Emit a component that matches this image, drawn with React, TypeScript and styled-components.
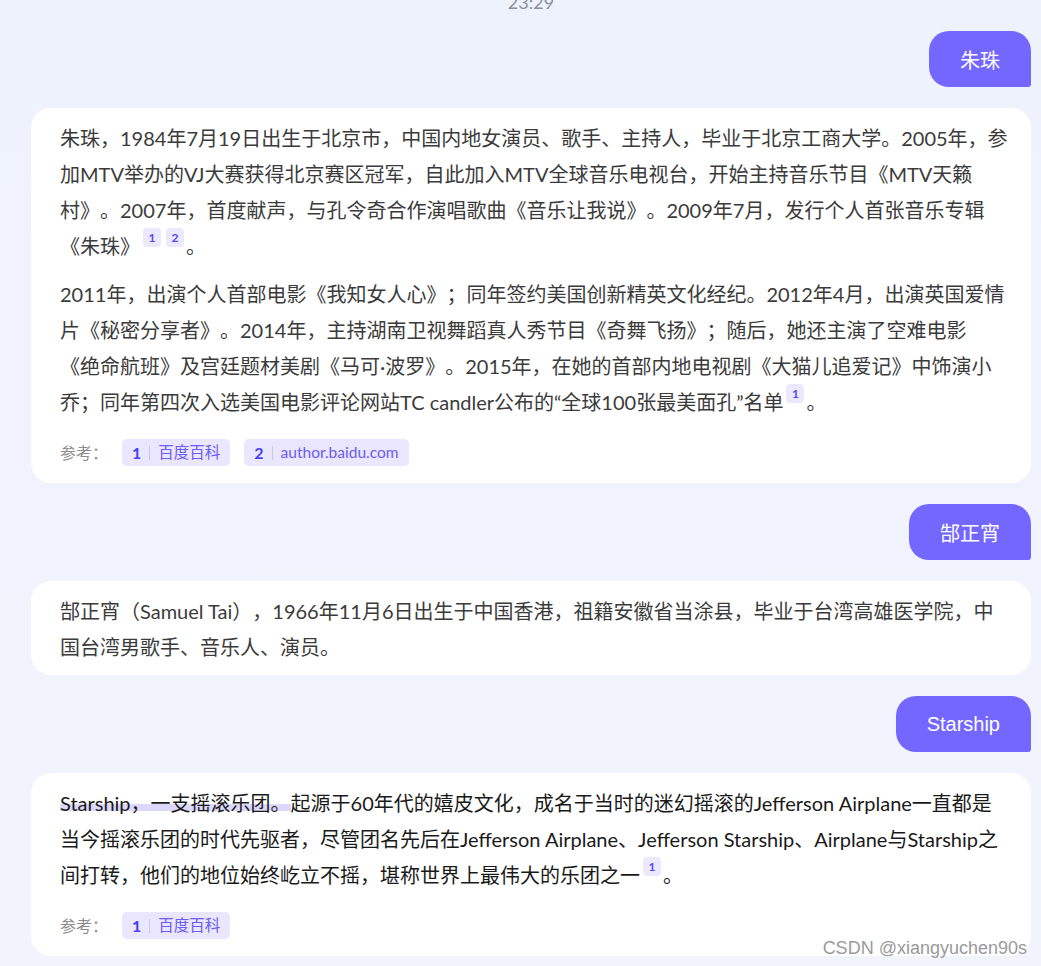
import styled, { createGlobalStyle } from "styled-components";

const GlobalStyle = createGlobalStyle`
  html, body {
    margin: 0;
    padding: 0;
  }
  body {
    background: linear-gradient(180deg, #eef2fd 0%, #f2f4fd 100%);
    font-family: Lato, "Noto Sans CJK SC", sans-serif;
  }
`;

type Ref = { id: number; name: string };

const zhuzhuRefs: Ref[] = [
  { id: 1, name: "百度百科" },
  { id: 2, name: "author.baidu.com" },
];

const starshipRefs: Ref[] = [{ id: 1, name: "百度百科" }];

const RefList = ({ items }: { items: Ref[] }) => (
  <Refs>
    <RefsLabel>参考：</RefsLabel>
    {items.map((r) => (
      <RefChip key={r.id}>
        <RefIndex>{r.id}</RefIndex>
        <RefDivider />
        <RefName>{r.name}</RefName>
      </RefChip>
    ))}
  </Refs>
);

const App = () => {
  return (
    <>
      <GlobalStyle />
      <Page>
        <Time>23:29</Time>
        <Thread>
          <UserRow>
            <UserBubble>朱珠</UserBubble>
          </UserRow>
          <AnswerCard>
            <Paragraph>
              朱珠，1984年7月19日出生于北京市，中国内地女演员、歌手、主持人，毕业于北京工商大学。2005年，参
              <br />
              加MTV举办的VJ大赛获得北京赛区冠军，自此加入MTV全球音乐电视台，开始主持音乐节目《MTV天籁
              <br />
              村》。2007年，首度献声，与孔令奇合作演唱歌曲《音乐让我说》。2009年7月，发行个人首张音乐专辑
              <br />
              《朱珠》<Cite>1</Cite>
              <Cite>2</Cite>。
            </Paragraph>
            <Paragraph>
              2011年，出演个人首部电影《我知女人心》；同年签约美国创新精英文化经纪。2012年4月，出演英国爱情
              <br />
              片《秘密分享者》。2014年，主持湖南卫视舞蹈真人秀节目《奇舞飞扬》；随后，她还主演了空难电影
              <br />
              《绝命航班》及宫廷题材美剧《马可·波罗》。2015年，在她的首部内地电视剧《大猫儿追爱记》中饰演小
              <br />
              乔；同年第四次入选美国电影评论网站TC candler公布的“全球100张最美面孔”名单<Cite>1</Cite>。
            </Paragraph>
            <RefList items={zhuzhuRefs} />
          </AnswerCard>

          <UserRow>
            <UserBubble>郜正宵</UserBubble>
          </UserRow>
          <AnswerCard>
            <Paragraph>
              郜正宵（Samuel Tai），1966年11月6日出生于中国香港，祖籍安徽省当涂县，毕业于台湾高雄医学院，中
              <br />
              国台湾男歌手、音乐人、演员。
            </Paragraph>
          </AnswerCard>

          <UserRow>
            <UserBubble>Starship</UserBubble>
          </UserRow>
          <AnswerCard $strong>
            <Paragraph>
              <Mark>Starship，一支摇滚乐团。</Mark>
              起源于60年代的嬉皮文化，成名于当时的迷幻摇滚的Jefferson Airplane一直都是
              <br />
              当今摇滚乐团的时代先驱者，尽管团名先后在Jefferson Airplane、Jefferson Starship、Airplane与Starship之
              <br />
              间打转，他们的地位始终屹立不摇，堪称世界上最伟大的乐团之一<Cite>1</Cite>。
            </Paragraph>
            <RefList items={starshipRefs} />
          </AnswerCard>
        </Thread>
        <Watermark>CSDN @xiangyuchen90s</Watermark>
      </Page>
    </>
  );
};

export default App;

const Page = styled.div`
  position: relative;
  min-height: 966px;
  box-sizing: border-box;
  padding: 0 10px 0 31px;
  overflow: hidden;
`;

const Time = styled.div`
  margin: -8px 0 19px;
  text-align: center;
  font-size: 18px;
  line-height: 20px;
  color: #8b8f99;
`;

const Thread = styled.div`
  display: flex;
  flex-direction: column;
  gap: 21px;
`;

const UserRow = styled.div`
  display: flex;
  justify-content: flex-end;
`;

const UserBubble = styled.div`
  height: 56px;
  box-sizing: border-box;
  padding: 0 31px;
  display: flex;
  align-items: center;
  background: #7367ff;
  color: #ffffff;
  font-family: "Liberation Sans", "Noto Sans CJK SC", sans-serif;
  font-size: 20px;
  border-radius: 20px 20px 3px 20px;
`;

const AnswerCard = styled.div<{ $strong?: boolean }>`
  background: #ffffff;
  border-radius: 20px;
  padding: 12px 29px 10px;
  color: ${({ $strong }) => ($strong ? "#1a1a1a" : "#3b3b3b")};
  font-size: 20px;
  line-height: 36px;
`;

const Paragraph = styled.p`
  margin: 0;
  text-spacing-trim: space-all;
  white-space: nowrap;

  & + & {
    margin-top: 12px;
  }
`;

const Cite = styled.span`
  display: inline-block;
  width: 18px;
  height: 19px;
  margin: 0 2px 0 3px;
  border-radius: 4px;
  background: #ece9ff;
  color: #5448f2;
  font-size: 12px;
  font-weight: 700;
  line-height: 19px;
  text-align: center;
  vertical-align: 12px;
`;

const Mark = styled.span`
  background: linear-gradient(
    180deg,
    transparent 0%,
    transparent 54%,
    #dcd8fc 54%,
    #dcd8fc 84%,
    transparent 84%
  );
`;

const Refs = styled.div`
  display: flex;
  align-items: center;
  gap: 14px;
  margin: 19px 0 7px;
`;

const RefsLabel = styled.span`
  font-size: 16px;
  line-height: 27px;
  color: #8c8c8c;
`;

const RefChip = styled.span`
  display: inline-flex;
  align-items: center;
  height: 27px;
  padding: 0 10px;
  border-radius: 5px;
  background: #e9e6fe;
`;

const RefIndex = styled.span`
  font-size: 16px;
  font-weight: 700;
  color: #4a3ef0;
  line-height: 27px;
`;

const RefDivider = styled.span`
  width: 1px;
  height: 14px;
  margin: 0 8px;
  background: #cbc5f8;
`;

const RefName = styled.span`
  font-size: 15.5px;
  color: #6a5cf5;
  line-height: 27px;
`;

const Watermark = styled.div`
  position: absolute;
  right: 14px;
  bottom: 7px;
  font-family: "Liberation Sans", sans-serif;
  font-size: 18px;
  color: #9a9a9a;
  text-shadow: 0 0 2px #ffffff;
`;
